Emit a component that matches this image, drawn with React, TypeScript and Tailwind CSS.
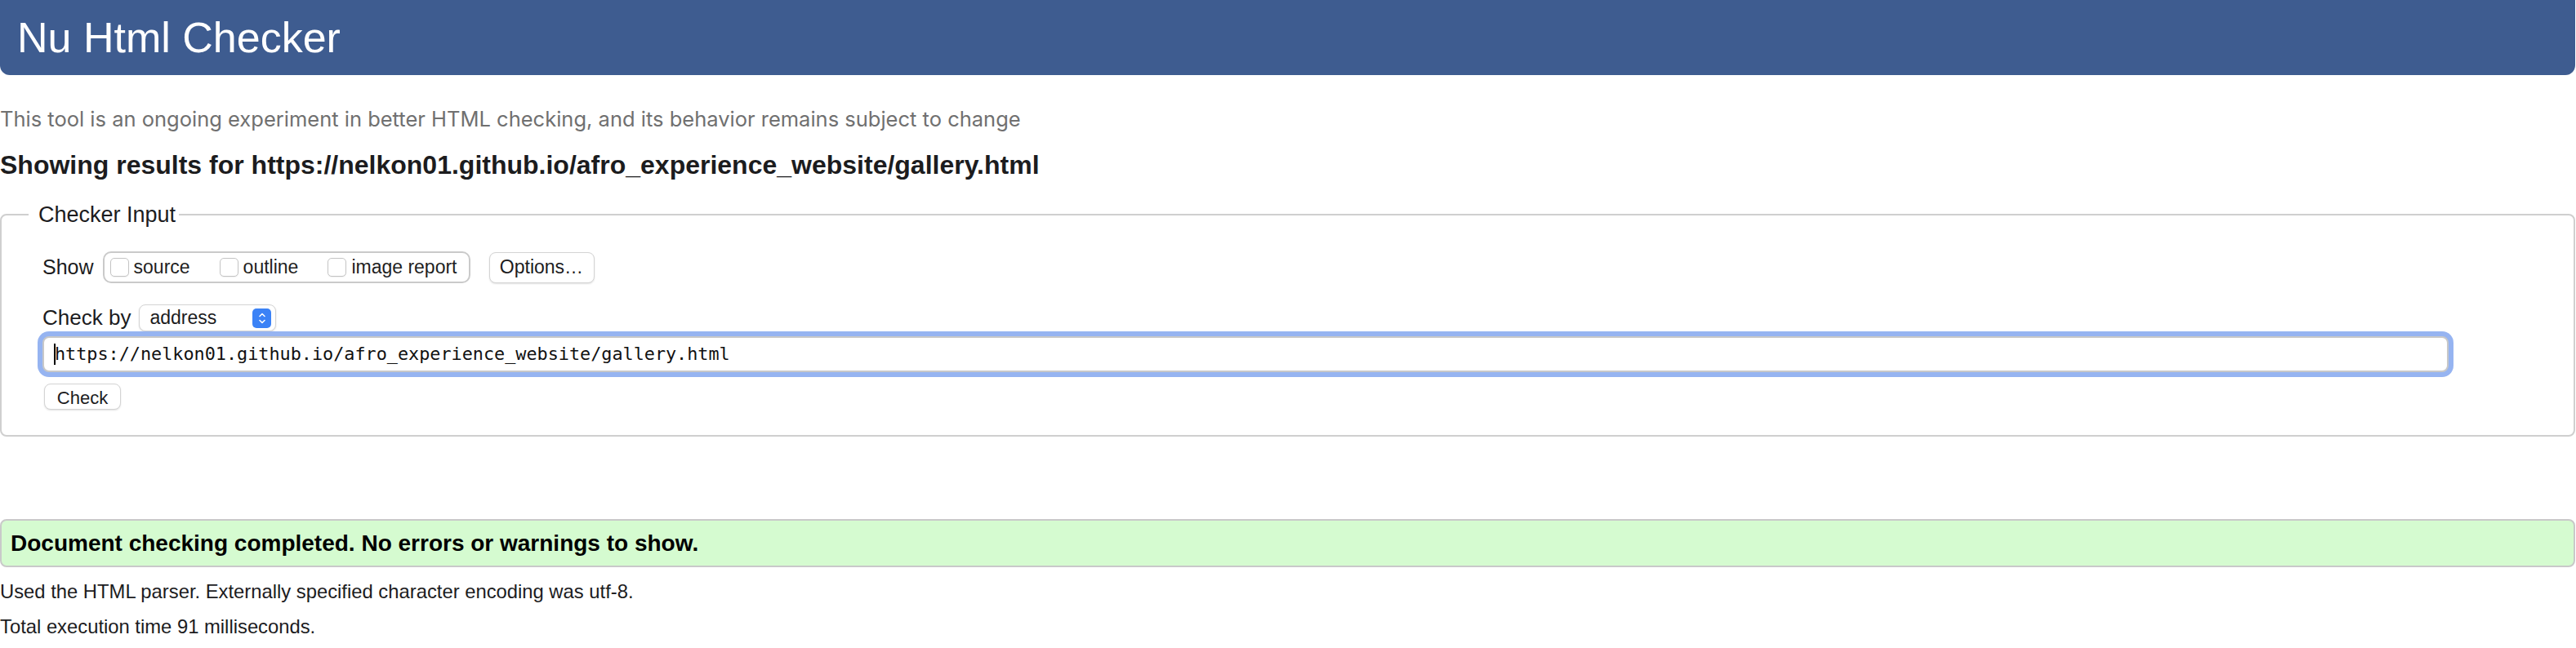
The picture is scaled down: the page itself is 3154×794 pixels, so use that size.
import { ChevronUp, ChevronDown } from 'lucide-react';

const sans = "font-['Liberation_Sans',Arial,sans-serif]";

function Checkbox({ label }: { label: string }) {
  return (
    <label className="flex items-center gap-[6px]">
      <span className="w-[23px] h-[23px] rounded-[5px] border-[1.5px] border-[#c4c4c4] bg-white shadow-[0_1px_1px_rgba(0,0,0,0.06)]" />
      <span className="text-[23px] text-[#1f1f1f]">{label}</span>
    </label>
  );
}

export default function App() {
  const url = 'https://nelkon01.github.io/afro_experience_website/gallery.html';

  return (
    <div className={`${sans} w-[3154px] h-[794px] bg-white text-[#222] overflow-hidden`}>
      {/* Header */}
      <div className="h-[92px] mr-[1px] bg-[#3e5c90] rounded-b-[12px] flex items-center pl-[21px]">
        <h1 className="text-[52px] leading-none text-white">Nu Html Checker</h1>
      </div>

      <p className="mt-[39px] font-['Inter',sans-serif] text-[25.5px] leading-[30px] text-[#707070]">
        This tool is an ongoing experiment in better HTML checking, and its behavior remains subject to change
      </p>

      <h2 className="mt-[22px] text-[32px] leading-[38px] font-bold text-[#1c1c1e]">
        Showing results for {url}
      </h2>

      {/* Checker input */}
      <fieldset className="mt-[27px] mr-[1px] border-2 border-[#cfcfcf] rounded-[8px] p-0 pb-[31px]">
        <legend className="ml-[33px] pl-[12px] pr-[4px] text-[27px] leading-[30px] text-[#1c1c1e]">
          Checker Input
        </legend>

        <div className="pl-[50px] pt-[30px] flex flex-col items-start">
          <div className="h-[39px] flex items-center">
            <span className="text-[25px] text-[#1c1c1e]">Show</span>
            <div className="ml-[11px] h-[39px] flex items-center gap-[36px] pl-[7px] pr-[14px] border-2 border-[#cacaca] rounded-[10px]">
              <Checkbox label="source" />
              <Checkbox label="outline" />
              <Checkbox label="image report" />
            </div>
            <button className="ml-[23px] h-[38px] w-[129px] bg-white border border-[#d4d4d4] rounded-[8px] shadow-[0_1px_2px_rgba(0,0,0,0.12)] text-[23px] text-[#1c1c1e]">
              Options…
            </button>
          </div>

          <div className="mt-[26px] h-[33px] flex items-center">
            <span className="text-[26px] text-[#1c1c1e]">Check by</span>
            <div className="ml-[10px] w-[168px] h-[33px] flex items-center justify-between pl-[12px] pr-[5px] bg-white border border-[#d4d4d4] rounded-[8px] shadow-[0_1px_2px_rgba(0,0,0,0.12)]">
              <span className="text-[23px] text-[#1c1c1e]">address</span>
              <span className="w-[23px] h-[24px] rounded-[5px] bg-[#3b82f6] flex flex-col items-center justify-center text-white">
                <ChevronUp size={12} strokeWidth={3} className="-mb-[2px]" />
                <ChevronDown size={12} strokeWidth={3} className="-mt-[2px]" />
              </span>
            </div>
          </div>

          <div className="mt-[6px] w-[2946px] h-[44px] flex items-center pl-[12px] bg-white border-2 border-[#c8c8c8] rounded-[8px] ring-[6px] ring-[#96b4f1]">
            <span className="w-[2px] h-[26px] bg-black" />
            <span className="-ml-[1px] font-['DejaVu_Sans_Mono',monospace] text-[21.8px] text-[#111]">{url}</span>
          </div>

          <button className="mt-[14px] ml-[2px] h-[32px] w-[94px] bg-white border border-[#d4d4d4] rounded-[8px] shadow-[0_1px_2px_rgba(0,0,0,0.12)] text-[22px] text-[#1c1c1e]">
            Check
          </button>
        </div>
      </fieldset>

      {/* Result */}
      <div className="mt-[101px] mr-[1px] h-[59px] flex items-center pl-[11px] bg-[#d5fbd0] border-2 border-[#c9c9c9] rounded-[8px]">
        <span className="text-[28px] font-bold text-black">
          Document checking completed. No errors or warnings to show.
        </span>
      </div>

      <p className="mt-[16px] text-[23.8px] leading-[28px] text-[#1c1c1e]">
        Used the HTML parser. Externally specified character encoding was utf-8.
      </p>
      <p className="mt-[15px] text-[23.8px] leading-[28px] text-[#1c1c1e]">
        Total execution time 91 milliseconds.
      </p>
    </div>
  );
}
